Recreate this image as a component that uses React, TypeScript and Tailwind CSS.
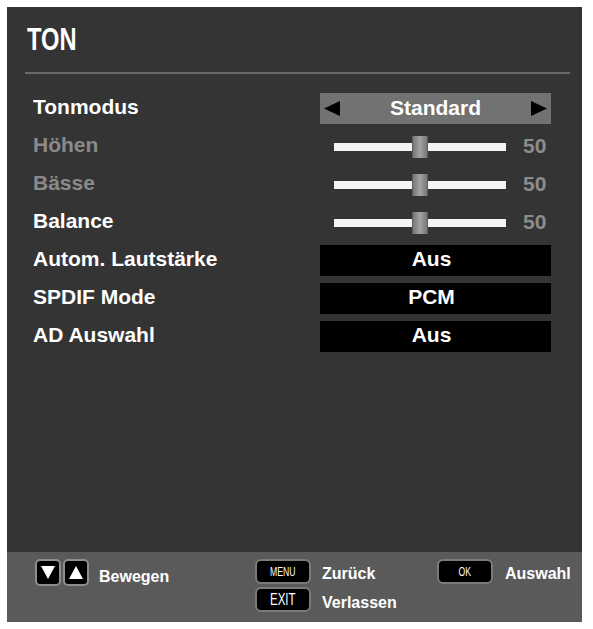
import React from "react"

type Row =
    | { kind: "select"; label: string; value: string }
    | { kind: "slider"; label: string; value: number; dim?: boolean }
    | { kind: "box"; label: string; value: string }

const rows: Row[] = [
    { kind: "select", label: "Tonmodus", value: "Standard" },
    { kind: "slider", label: "Höhen", value: 50, dim: true },
    { kind: "slider", label: "Bässe", value: 50, dim: true },
    { kind: "slider", label: "Balance", value: 50 },
    { kind: "box", label: "Autom. Lautstärke", value: "Aus" },
    { kind: "box", label: "SPDIF Mode", value: "PCM" },
    { kind: "box", label: "AD Auswahl", value: "Aus" },
]

const Slider = ({ value }: { value: number }) => (
    <div className="flex h-full w-full items-center pl-[14px]">
        <div className="relative h-[8px] w-[172px] bg-[#f4f4f4]">
            <div
                className="absolute top-1/2 h-[22px] w-[16px] -translate-x-1/2 -translate-y-1/2 border-x border-[#5c5c5c] bg-gradient-to-r from-[#777] via-[#a4a4a4] to-[#777]"
                style={{ left: `${value}%` }}
            />
        </div>
        <span className="ml-[17px] pb-[3px] text-[21px] font-bold leading-none text-[#8c8c8c]">{value}</span>
    </div>
)

const Arrow = ({ dir }: { dir: "left" | "right" }) => (
    <svg width="16" height="15" viewBox="0 0 16 15">
        {dir === "left" ? <polygon points="16,0 16,15 0,7.5" fill="#000" /> : <polygon points="0,0 0,15 16,7.5" fill="#000" />}
    </svg>
)

const NavIcon = ({ up }: { up?: boolean }) => (
    <div className="flex h-[27px] w-[26px] items-center justify-center rounded-[5px] border-2 border-[#8e8e8e] bg-black">
        <svg width="14" height="13" viewBox="0 0 14 13">
            {up ? <polygon points="7,0 14,13 0,13" fill="#fff" /> : <polygon points="0,0 14,0 7,13" fill="#fff" />}
        </svg>
    </div>
)

const Key = ({ txt, small }: { txt: string; small?: boolean }) => (
    <div className="flex h-[25px] w-[56px] items-center justify-center rounded-[6px] border-2 border-[#7a7a7a] bg-black">
        <span
            className={`inline-block scale-x-[0.72] font-normal leading-none text-white ${small ? "text-[12px]" : "text-[16px]"}`}
        >
            {txt}
        </span>
    </div>
)

export default function App() {
    return (
        <div
            className="h-[629px] w-[593px] bg-white pl-[7px] pt-[7px]"
            style={{ fontFamily: '"Liberation Sans", Arial, sans-serif' }}
        >
            <div className="flex h-[615px] w-[575px] flex-col bg-[#343434]">
                <div className="pl-[20px] pt-[16px]">
                    <h1 className="inline-block origin-left scale-x-[0.74] text-[32px] font-bold leading-[32px] text-white">
                        TON
                    </h1>
                </div>
                <div className="ml-[18px] mr-[12px] mt-[15px] h-[2px] bg-[#696969]" />

                <div className="mt-[19px] flex flex-col gap-[7px] pl-[26px] pr-[31px]">
                    {rows.map((row) => (
                        <div key={row.label} className="flex h-[31px] items-center">
                            <span
                                className={`flex-1 pb-[5px] text-[21px] font-bold leading-none ${
                                    row.kind === "slider" && row.dim ? "text-[#8a8a8a]" : "text-white"
                                }`}
                            >
                                {row.label}
                            </span>
                            <div className="h-full w-[231px]">
                                {row.kind === "select" && (
                                    <div className="flex h-full items-center justify-between bg-[#727272] px-[4px]">
                                        <Arrow dir="left" />
                                        <span className="pb-[3px] text-[21px] font-bold leading-none text-white">{row.value}</span>
                                        <Arrow dir="right" />
                                    </div>
                                )}
                                {row.kind === "slider" && <Slider value={row.value} />}
                                {row.kind === "box" && (
                                    <div className="flex h-full items-center justify-center bg-black pb-[4px] pr-[8px]">
                                        <span className="text-[21px] font-bold leading-none text-white">{row.value}</span>
                                    </div>
                                )}
                            </div>
                        </div>
                    ))}
                </div>

                <div className="flex-1" />

                <div className="flex h-[70px] bg-[#5a5a5a] pl-[28px] pt-[7px]">
                    <div className="flex w-[220px] items-start">
                        <NavIcon />
                        <div className="ml-[2px]">
                            <NavIcon up />
                        </div>
                        <span className="ml-[10px] mt-[10px] text-[16px] font-bold leading-none text-white">Bewegen</span>
                    </div>
                    <div className="flex w-[182px] items-start">
                        <div className="flex flex-col gap-[3px]">
                            <Key txt="MENU" small />
                            <Key txt="EXIT" />
                        </div>
                        <div className="ml-[11px] flex flex-col gap-[13px] pt-[7px] text-[16px] font-bold leading-none text-white">
                            <span>Zurück</span>
                            <span>Verlassen</span>
                        </div>
                    </div>
                    <div className="flex items-start">
                        <Key txt="OK" small />
                        <span className="ml-[12px] mt-[7px] text-[16px] font-bold leading-none text-white">Auswahl</span>
                    </div>
                </div>
            </div>
        </div>
    )
}
